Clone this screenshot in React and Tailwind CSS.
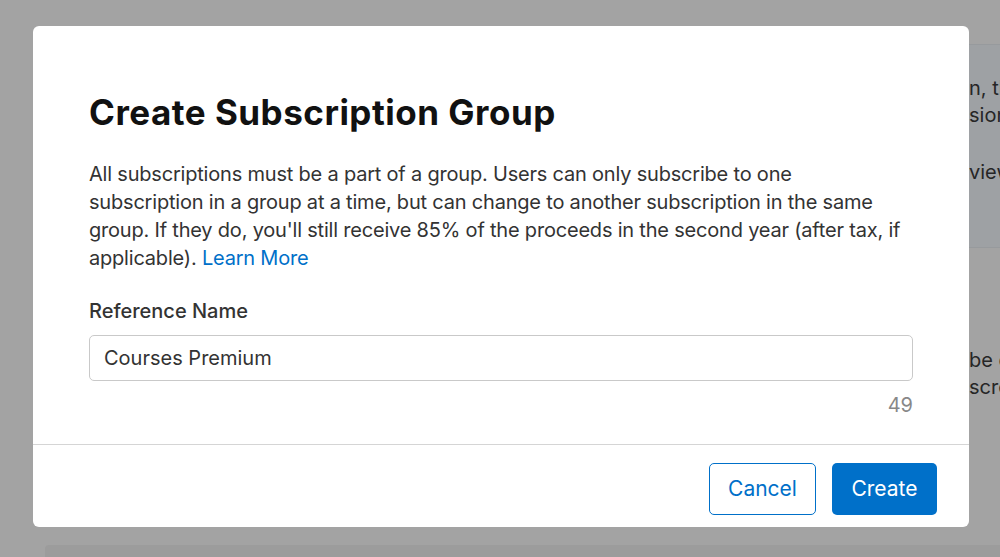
import { useState } from "react";

const BackdropPage = () => {
  return (
    <div className="flex flex-col h-full pl-[45px] text-[20px] leading-[27px] text-[#262626]">
      <div className="mt-[44px] h-[204px] bg-[#9ea1a4] border-t border-b border-[#979a9d] pl-[924px] pt-[30px] whitespace-nowrap">
        <p>n, the</p>
        <p>sions</p>
        <p className="mt-[30px]">views</p>
      </div>
      <div className="pl-[924px] pt-[99px] whitespace-nowrap">
        <p>be d</p>
        <p>scre</p>
      </div>
      <div className="mt-auto h-[12px] bg-[#9c9c9c] rounded-tl-[4px]" />
    </div>
  );
};

const App = () => {
  const [name, setName] = useState("Courses Premium");

  return (
    <div className="relative w-[1000px] h-[557px] overflow-hidden bg-[#a3a3a3] font-['Inter','Helvetica_Neue',sans-serif]">
      <BackdropPage />

      <div className="absolute left-[33px] top-[26px] w-[936px] h-[501px] bg-white rounded-[6px] flex flex-col">
        <div className="px-[56px] pt-[66px] pb-[25px]">
          <h1 className="text-[35px] leading-[40px] font-bold text-[#111] tracking-[0.5px]">
            Create Subscription Group
          </h1>
          <p className="mt-[28px] text-[20px] leading-[28px] text-[#333] tracking-[-0.2px] whitespace-nowrap">
            All subscriptions must be a part of a group. Users can only
            subscribe to one
            <br />
            subscription in a group at a time, but can change to another
            subscription in the same
            <br />
            group. If they do, you'll still receive 85% of the proceeds in the
            second year (after tax, if
            <br />
            applicable). <a className="text-[#0070c9]">Learn More</a>
          </p>
          <label className="block mt-[25px] text-[20px] leading-[28px] font-medium text-[#333]">
            Reference Name
          </label>
          <input
            value={name}
            onChange={(e) => setName(e.target.value)}
            className="mt-[10px] w-full h-[46px] px-[14px] border border-[#c9c9c9] rounded-[5px] text-[20px] text-[#333] outline-none"
          />
          <div className="mt-[10px] text-right text-[20px] leading-[28px] text-[#888]">
            {50 - name.length + 14}
          </div>
        </div>

        <div className="border-t border-[#d5d5d5] flex justify-end gap-[16px] pt-[18px] pr-[32px]">
          <button className="w-[107px] h-[52px] rounded-[5px] border border-[#0070c9] text-[21px] text-[#0070c9]">
            Cancel
          </button>
          <button className="w-[105px] h-[52px] rounded-[5px] bg-[#0070c9] text-[21px] text-white">
            Create
          </button>
        </div>
      </div>
    </div>
  );
};

export default App;
